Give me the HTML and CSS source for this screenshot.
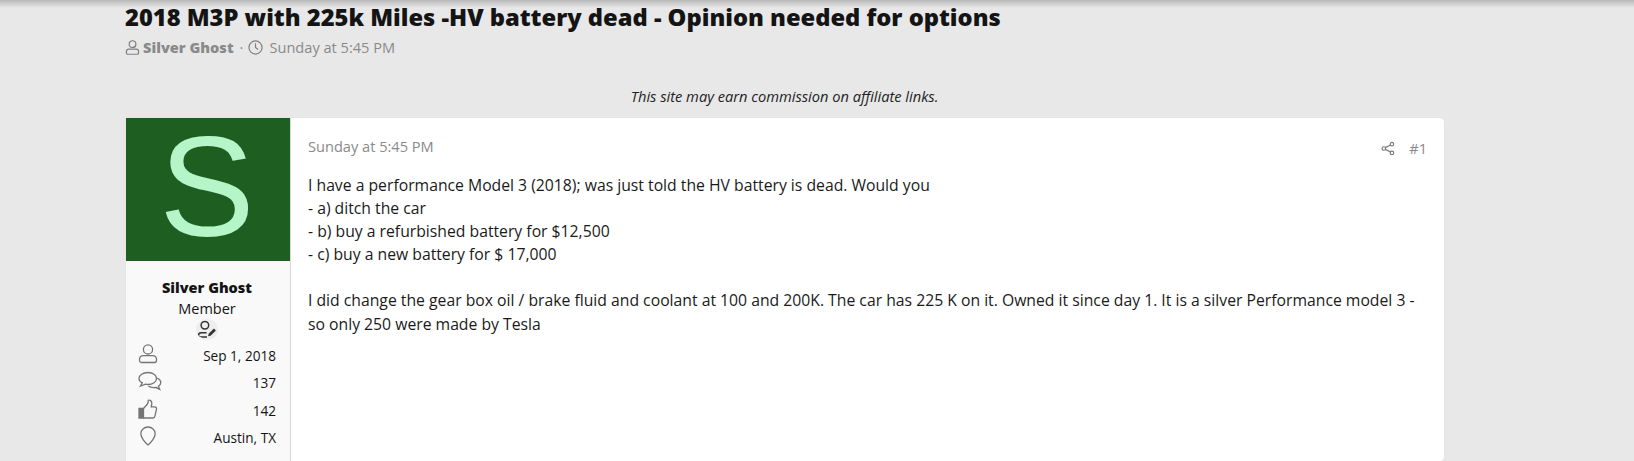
FILE: index.html
```html
<!DOCTYPE html>
<html lang="en">
<head>
    <meta charset="UTF-8">
    <title>2018 M3P with 225k Miles -HV battery dead</title>
    <link rel="stylesheet" href="styles.css">
</head>
<body>
    <div class="top-shadow"></div>
    <div class="page">
        <h1 class="thread-title">2018 M3P with 225k Miles -HV battery dead - Opinion needed for options</h1>
        <div class="thread-meta">
            <svg class="meta-icon" viewBox="0 0 15 16"><circle cx="7.500" cy="4.400" r="3.600"/><path d="M1 12.500c0-1.500 1.100-2.700 2.600-2.700h7.800c1.500 0 2.600 1.200 2.600 2.700v1c0 1-.6 1.700-1.600 1.700H2.600c-1 0-1.600-.7-1.600-1.700z"/></svg>
            <span class="meta-author">Silver Ghost</span>
            <span class="meta-dot">·</span>
            <svg class="meta-icon" viewBox="0 0 16 16"><circle cx="8" cy="8" r="7"/><path d="M8 3.500V8l2.800 2.200"/></svg>
            <span class="meta-date">Sunday at 5:45 PM</span>
        </div>
        <p class="affiliate">This site may earn commission on affiliate links.</p>

        <div class="post">
            <div class="user-cell">
                <div class="avatar">S</div>
                <div class="user-info">
                    <div class="user-name">Silver Ghost</div>
                    <div class="user-title">Member</div>
                    <div class="user-badge">
                        <svg viewBox="0 0 20 18"><circle cx="8" cy="5" r="3.600"/><path d="M2 16v-1.600C2 12.800 3.200 12 4.600 12h5M2 16h8"/><path class="pen" d="M11 15.500l.6-2.400 5-5 1.800 1.800-5 5z"/></svg>
                    </div>
                    <div class="stat">
                        <svg class="stat-icon" viewBox="0 0 20 20"><circle cx="10" cy="5.400" r="4.600"/><path d="M1.500 15.500c0-2.300 1.600-3.900 3.800-3.900h9.400c2.200 0 3.800 1.600 3.800 3.900v.8c0 1.300-.8 2.200-2 2.200H3.500c-1.200 0-2-.9-2-2.200z"/></svg>
                        <span>Sep 1, 2018</span>
                    </div>
                    <div class="stat">
                        <svg class="stat-icon wide" viewBox="0 0 24 20"><path d="M10 1.500c4.800 0 8.500 2.600 8.500 6s-3.700 6-8.500 6c-.9 0-1.700-.1-2.500-.3L2.500 15l1.800-3.200C2.200 10.800 1 9.200 1 7.500c0-3.400 4-6 9-6z"/><path d="M19.200 7c2.200 1 3.600 2.600 3.600 4.500 0 1.500-.9 2.900-2.400 3.800l1.300 3-4-2c-.7.200-1.500.3-2.300.3-2 0-3.800-.6-5-1.600"/></svg>
                        <span>137</span>
                    </div>
                    <div class="stat">
                        <svg class="stat-icon" viewBox="0 0 20 20"><path class="solid" d="M1 9.500h4.500v9.500H1z"/><path d="M5.500 9.500l3.800-4.200c.7-.9 1-1.800 1-4 2.400-.6 3.700 1.200 3.500 3.500l-.6 3h3.400c1.400 0 2.200 1.200 1.900 2.400l-1.600 7c-.2 1.100-1 1.800-2 1.800H5.500"/></svg>
                        <span>142</span>
                    </div>
                    <div class="stat">
                        <svg class="stat-icon" viewBox="0 0 20 20"><path d="M10 1c-4 0-7.200 3-7.200 6.800 0 3.600 4.200 8.800 7.200 11.200 3-2.400 7.200-7.600 7.200-11.200C17.200 4 14 1 10 1z"/></svg>
                        <span>Austin, TX</span>
                    </div>
                </div>
            </div>
            <div class="post-main">
                <div class="post-head">
                    <span>Sunday at 5:45 PM</span>
                    <div class="post-actions">
                        <svg class="share-icon" viewBox="0 0 16 16"><circle cx="12.500" cy="3" r="2"/><circle cx="3.200" cy="8" r="2"/><circle cx="12.500" cy="13" r="2"/><path d="M5 7l5.800-3.100M5 9l5.800 3.100"/></svg>
                        <span>#1</span>
                    </div>
                </div>
                <div class="post-body">
                    I have a performance Model 3 (2018); was just told the HV battery is dead. Would you<br>
                    - a) ditch the car<br>
                    - b) buy a refurbished battery for $12,500<br>
                    - c) buy a new battery for $ 17,000<br>
                    <br>
                    I did change the gear box oil / brake fluid and coolant at 100 and 200K. The car has 225 K on it. Owned it since day 1. It is a silver Performance model 3 - so only 250 were made by Tesla
                </div>
            </div>
        </div>
    </div>
</body>
</html>
```

FILE: styles.css
```css
html, body {
    height: 461px;
    overflow: hidden;
}

body {
    margin: 0;
    background-color: #e8e8e8;
    color: #141414;
    font-family: "Open Sans", sans-serif;
    position: relative;
}

.top-shadow {
    position: absolute;
    top: 0;
    left: 0;
    right: 0;
    height: 8px;
    background: linear-gradient(#b8b8b8, #e8e8e8);
}

.page {
    width: 1319px;
    margin-left: 125px;
}

.thread-title {
    margin: 0;
    padding-top: 3px;
    font-size: 23.7px;
    font-weight: 800;
    line-height: 29px;
    white-space: nowrap;
}

.thread-meta {
    display: flex;
    align-items: center;
    margin-top: 5px;
    font-size: 14.6px;
    line-height: 20px;
    color: #8a8a8a;
}

.meta-icon {
    width: 15px;
    height: 15px;
    fill: none;
    stroke: #808080;
    stroke-width: 1.3;
}

.meta-author {
    margin-left: 3px;
    font-weight: 800;
}

.meta-dot {
    margin: 0 5px 0 6px;
}

.meta-date {
    margin-left: 6px;
}

.affiliate {
    margin: 29px 0 0;
    font-size: 14.65px;
    line-height: 20px;
    font-style: italic;
    text-align: center;
    color: #222;
}

.post {
    display: flex;
    height: 343px;
    margin: 12px 0 0 1px;
    background-color: #fff;
    border-radius: 0 4px 4px 0;
    box-shadow: 0 0 1px #c4c4c4;
}

.user-cell {
    width: 164px;
    flex-shrink: 0;
    background-color: #f9f9f9;
    border-right: 1px solid #d8d8d8;
}

.avatar {
    height: 143px;
    padding-right: 2px;
    box-sizing: border-box;
    background-color: #1e5e20;
    color: #b6f5c8;
    font-family: "Liberation Sans", sans-serif;
    font-size: 143px;
    line-height: 137px;
    text-align: center;
}

.user-info {
    padding: 17px 14px 0 12px;
    font-size: 13.6px;
    text-align: center;
}

.user-name {
    font-size: 14.5px;
    font-weight: 800;
    line-height: 20px;
}

.user-title {
    font-size: 14.5px;
    line-height: 21px;
}

.user-badge {
    display: flex;
    justify-content: center;
    height: 23px;
}

.user-badge svg {
    width: 22px;
    height: 21px;
    padding: 1px 0;
    background-color: #eee;
    border-radius: 50%;
    box-sizing: border-box;
    fill: none;
    stroke: #333;
    stroke-width: 1.4;
}

.user-badge .pen {
    fill: #333;
    stroke: none;
}

.stat {
    display: flex;
    justify-content: space-between;
    align-items: center;
    height: 27.3px;
    line-height: 27px;
}

.stat-icon {
    width: 20px;
    height: 20px;
    margin-bottom: 3px;
    fill: none;
    stroke: #757575;
    stroke-width: 1.3;
}

.stat-icon.wide {
    width: 24px;
}

.stat-icon .solid {
    fill: #757575;
}

.post-main {
    flex: 1;
    padding: 18px 17px 0 17px;
}

.post-head {
    display: flex;
    justify-content: space-between;
    font-size: 14.6px;
    line-height: 20px;
    color: #8a8a8a;
}

.post-actions {
    display: flex;
    align-items: center;
    gap: 14px;
    padding-top: 2px;
}

.share-icon {
    width: 14px;
    height: 15px;
    fill: none;
    stroke: #777;
    stroke-width: 1.3;
}

.post-body {
    margin-top: 16px;
    font-size: 15.74px;
    line-height: 23.1px;
    color: #1a1a1a;
}
```
